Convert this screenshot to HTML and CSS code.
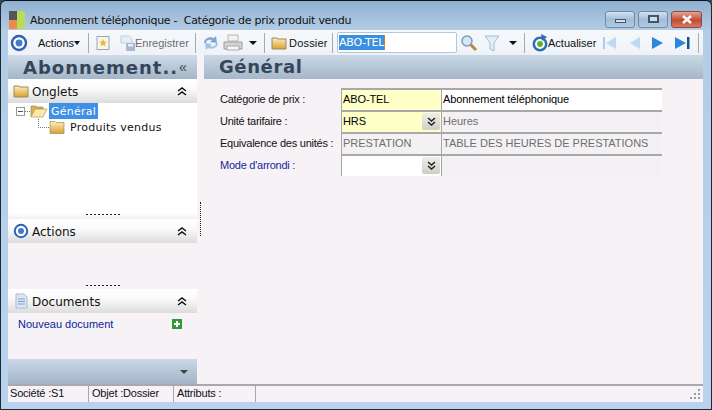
FILE: index.html
```html
<!DOCTYPE html>
<html lang="fr">
<head>
<meta charset="utf-8">
<title>Abonnement téléphonique</title>
<link rel="stylesheet" href="styles.css">
</head>
<body>
<div class="window">
  <header class="titlebar">
    <svg class="app-icon" width="16" height="18" viewBox="0 0 16 18"><rect width="8" height="9" fill="#555"/><rect x="8" width="8" height="18" fill="#b5dd5a"/><rect y="9" width="8" height="9" fill="#f08a4a"/></svg>
    <span class="title">Abonnement téléphonique -  Catégorie de prix produit vendu</span>
    <div class="winbtns">
      <span class="winbtn"><i class="g-min"></i></span>
      <span class="winbtn"><i class="g-max"></i></span>
      <span class="winbtn close">
        <svg width="12" height="9" viewBox="0 0 12 9"><path d="M2 1l8 7M10 1L2 8" stroke="#fff" stroke-width="2.4"/></svg>
      </span>
    </div>
  </header>

  <nav class="toolbar">
    <svg class="ic ic-target" width="18" height="18" viewBox="0 0 18 18"><circle cx="9" cy="9" r="7" fill="#fff" stroke="#2f62b4" stroke-width="2.4"/><circle cx="9" cy="9" r="3.4" fill="#3f7cd0"/></svg>
    <span class="tb-text actions">Actions<i class="caret small"></i></span>
    <i class="sep s1"></i>
    <svg class="ic ic-new" width="16" height="16" viewBox="0 0 16 16"><rect x="2" y="1.5" width="12" height="13" fill="#fbf6e4" stroke="#9aa6bb"/><path d="M8 4l1.2 2.500 2.600.3-2 1.800.6 2.600L8 9.800l-2.400 1.400.6-2.600-2-1.800 2.600-.3z" fill="#e6b83c"/></svg>
    <svg class="ic ic-save" width="16" height="16" viewBox="0 0 16 16"><path d="M1 1h8l3 3v4H1z" fill="#e8edf4" stroke="#c2cddb"/><rect x="6" y="8" width="9" height="8" fill="#a9b9d2"/><rect x="8" y="9" width="5" height="2.500" fill="#e8edf4"/></svg>
    <span class="tb-text disabled enreg">Enregistrer</span>
    <i class="sep s2"></i>
    <svg class="ic ic-sync" width="18" height="18" viewBox="0 0 18 18"><path d="M2 9c0-4 5-7 10-5l2-2 1 7-7-1 2-2C7 5 4 6 4 9z" fill="#7ea6d6"/><path d="M16 9c0 4-5 7-10 5l-2 2-1-7 7 1-2 2c3 1 6 0 6-3z" fill="#a7c3e0"/></svg>
    <svg class="ic ic-print" width="20" height="18" viewBox="0 0 20 18"><path d="M5 1h10v6H5z" fill="#f3f3f3" stroke="#b5b5b5"/><path d="M1 8h18v7H1z" fill="#d4d4d4" stroke="#9c9c9c"/><rect x="4" y="12" width="12" height="4" fill="#f5f5f5" stroke="#aaa"/></svg>
    <i class="caret tb-caret"></i>
    <i class="sep s2"></i>
    <svg class="ic ic-folder" width="16" height="16" viewBox="0 0 16 16"><use href="#folder"/></svg>
    <span class="tb-text dossier">Dossier</span>
    <i class="sep s3"></i>
    <div class="search"><span class="sel">ABO-TEL</span></div>
    <svg class="ic ic-loupe" width="18" height="18" viewBox="0 0 18 18"><path d="M10 10l6 6" stroke="#b78a3a" stroke-width="3"/><circle cx="7" cy="7" r="5" fill="#d3e7f7" stroke="#7d9cba" stroke-width="1.500"/></svg>
    <svg class="ic ic-funnel" width="16" height="18" viewBox="0 0 16 18"><path d="M1 2h14L10 9v8l-4-2V9z" fill="#e3eef8" stroke="#a3bed9"/></svg>
    <i class="caret tb-caret2"></i>
    <i class="sep s2"></i>
    <svg class="ic ic-refresh" width="18" height="18" viewBox="0 0 18 18"><circle cx="9" cy="10" r="6.200" fill="#fff" stroke="#2d6fb3" stroke-width="2.600"/><circle cx="9" cy="10" r="3" fill="#5cb531"/><path d="M10 0l6 3-5 4z" fill="#2d6fb3"/></svg>
    <span class="tb-text act">Actualiser</span>
    <svg class="ic nav n1" width="15" height="16" viewBox="0 0 15 16"><rect x="1" y="2" width="2" height="12" fill="#a9cdef"/><path d="M14 2v12L4 8z" fill="#bcd8f2"/></svg>
    <svg class="ic nav n2" width="15" height="16" viewBox="0 0 15 16"><path d="M13 2v12L3 8z" fill="#bcd8f2"/></svg>
    <svg class="ic nav n3" width="15" height="16" viewBox="0 0 15 16"><path d="M2 2v12L13 8z" fill="#2c86dc"/></svg>
    <svg class="ic nav n4" width="17" height="16" viewBox="0 0 17 16"><path d="M1 2v12L12 8z" fill="#2c86dc"/><rect x="13" y="2" width="2.500" height="12" fill="#1b4f94"/></svg>
    <i class="sep last"></i>
  </nav>

  <div class="body">
    <aside class="sidebar">
      <div class="side-title"><span class="side-name">Abonnement..</span><span class="collapse">«</span></div>

      <div class="pane-head">
        <svg class="pane-ic" width="16" height="16" viewBox="0 0 16 16"><defs><linearGradient id="fg" x1="0" y1="0" x2="0" y2="1"><stop offset="0" stop-color="#fdf0b8"/><stop offset="1" stop-color="#d99f32"/></linearGradient><g id="folder"><path d="M1 3h5l1 1h8v10H1z" fill="url(#fg)" stroke="#9a8a62"/></g></defs><use href="#folder"/></svg>
        <span class="pane-label">Onglets</span>
        <svg class="chev" width="10" height="9" viewBox="0 0 10 9"><path d="M1 4l4-3 4 3M1 8l4-3 4 3" fill="none" stroke="#111" stroke-width="1.500"/></svg>
      </div>
      <div class="tree">
        <div class="tree-row">
          <span class="expander"></span><span class="dash"></span>
          <svg class="tree-ic" width="18" height="14" viewBox="0 0 18 14"><path d="M1 2h5l1 1h6v2H5L1 13z" fill="#e2b04c" stroke="#9a8a62" stroke-width=".7"/><path d="M5 5h12l-4 8H1z" fill="#fbe9a8" stroke="#b09a5c" stroke-width=".7"/></svg>
          <span class="node sel-node">Général</span>
        </div>
        <div class="tree-row child">
          <span class="elbow"></span>
          <svg class="tree-ic" width="16" height="14" viewBox="0 0 16 14"><path d="M1 1.500h5l1 1h8v11H1z" fill="url(#fg)" stroke="#9a8a62" stroke-width=".7"/></svg>
          <span class="node">Produits vendus</span>
        </div>
      </div>
      <div class="grip"><i></i></div>

      <div class="pane-head">
        <svg class="pane-ic target" width="16" height="16" viewBox="0 0 16 16"><circle cx="8" cy="8" r="6.200" fill="#fff" stroke="#2f62b4" stroke-width="2"/><circle cx="8" cy="8" r="3" fill="#3f7cd0"/></svg>
        <span class="pane-label">Actions</span>
        <svg class="chev" width="10" height="9" viewBox="0 0 10 9"><path d="M1 4l4-3 4 3M1 8l4-3 4 3" fill="none" stroke="#111" stroke-width="1.500"/></svg>
      </div>
      <div class="actions-body"></div>
      <div class="grip tint"><i></i></div>

      <div class="pane-head">
        <svg class="pane-ic" width="16" height="16" viewBox="0 0 16 16"><path d="M3 1h8l3 3v11H3z" fill="#dce7f6" stroke="#a8b9d2"/><path d="M5 6h7M5 8.500h7M5 11h7" stroke="#7f9cc7"/></svg>
        <span class="pane-label">Documents</span>
        <svg class="chev" width="10" height="9" viewBox="0 0 10 9"><path d="M1 4l4-3 4 3M1 8l4-3 4 3" fill="none" stroke="#111" stroke-width="1.500"/></svg>
      </div>
      <div class="docs">
        <a class="doc-link">Nouveau document</a>
        <svg class="plus" width="10" height="10" viewBox="0 0 10 10"><rect width="10" height="10" fill="#2f9a3c"/><path d="M5 2v6M2 5h6" stroke="#fff" stroke-width="2"/></svg>
      </div>
      <div class="side-foot"><i class="caret foot-caret"></i></div>
    </aside>

    <div class="splitter"><i></i></div>

    <main class="main">
      <h1 class="main-title">Général</h1>
      <div class="form">
        <label class="lbl">Catégorie de prix :</label>
        <div class="field req">ABO-TEL</div>
        <div class="field white">Abonnement téléphonique</div>

        <label class="lbl">Unité tarifaire :</label>
        <div class="field req">HRS<span class="combo"><svg width="9" height="9" viewBox="0 0 9 9"><path d="M1 1l3.500 3L8 1M1 5l3.500 3L8 5" fill="none" stroke="#222" stroke-width="1.500"/></svg></span></div>
        <div class="field ro">Heures</div>

        <label class="lbl">Equivalence des unités :</label>
        <div class="field ro">PRESTATION</div>
        <div class="field ro">TABLE DES HEURES DE PRESTATIONS</div>

        <label class="lbl link">Mode d'arrondi :</label>
        <div class="field white">&nbsp;<span class="combo"><svg width="9" height="9" viewBox="0 0 9 9"><path d="M1 1l3.500 3L8 1M1 5l3.500 3L8 5" fill="none" stroke="#222" stroke-width="1.500"/></svg></span></div>
        <div class="field ro"></div>
      </div>
    </main>
  </div>

  <footer class="status">
    <span class="cell c1">Société :S1</span>
    <span class="cell c2">Objet :Dossier</span>
    <span class="cell c3">Attributs :</span>
    <span class="cell c4"></span>
    <svg class="resize" width="12" height="12" viewBox="0 0 12 12"><path d="M9 1h2v2H9zM5 5h2v2H5zM9 5h2v2H9zM1 9h2v2H1zM5 9h2v2H5zM9 9h2v2H9z" fill="#9a9aa0"/></svg>
  </footer>
</div>
</body>
</html>
```

FILE: styles.css
```css
* { box-sizing: border-box; }
html, body { margin: 0; padding: 0; }
body { width: 712px; height: 410px; overflow: hidden; background: #3a4a55; font-family: "Liberation Sans", Arial, sans-serif; font-size: 11px; color: #000; }

.window { width: 712px; height: 410px; display: flex; flex-direction: column; padding: 0 8px 7px 7px; border: 1px solid #1c2a33; border-top-color: #111; border-radius: 6px 6px 0 0; background: linear-gradient(180deg, #8fb0d0 0, #b4cde6 30px, #b9d2ee 100%); }

.titlebar { height: 29px; flex: none; display: flex; align-items: center; padding-top: 9px; }
.app-icon { flex: none; margin: 0 5px 0 1px; }
.title { font-family: "DejaVu Sans", sans-serif; font-size: 11px; letter-spacing: -0.27px; white-space: pre; color: #111; }
.winbtns { margin-left: auto; display: flex; gap: 3px; margin-top: -2px; margin-right: 1px; }
.winbtn { width: 30px; height: 17px; border: 1px solid #6f8aa5; border-radius: 3px; background: linear-gradient(180deg, #d3e1ef, #a3bdd7 50%, #b3cae1); display: flex; align-items: center; justify-content: center; }
.winbtn.close { width: 31px; border-color: #8a4a40; background: linear-gradient(180deg, #e6a493, #c14a34 55%, #d77a62); }
.g-min { width: 11px; height: 4px; border: 1px solid #456; background: #dde; margin-top: 3px; }
.g-max { width: 11px; height: 8px; border: 2px solid #456; background: #cde; }

.toolbar { height: 25px; flex: none; display: flex; align-items: center; background: linear-gradient(180deg, #f6f8fb, #eef2f7); padding-left: 2px; }
.ic { flex: none; display: block; }
.tb-text { font-family: "Liberation Sans", sans-serif; font-size: 11px; color: #111; white-space: nowrap; flex: none; }
.tb-text.disabled { color: #6c6c6c; }
.actions { margin-left: 10px; width: 41px; display: flex; align-items: center; }
.caret { display: inline-block; flex: none; width: 0; height: 0; border-left: 4px solid transparent; border-right: 4px solid transparent; border-top: 4px solid #111; }
.caret.small { border-left-width: 3.5px; border-right-width: 3.5px; }
.sep { flex: none; width: 1px; height: 20px; background: #a9a9a9; margin: 0 6px 0 7px; }
.sep.s1 { margin-left: 9px; }
.sep.s3 { margin: 0 4px 0 8px; }
.ic-new { margin-right: 9px; }
.enreg { margin-left: -1px; width: 53px; }
.ic-print { margin-left: 3px; }
.tb-caret { margin-left: 6px; }
.dossier { margin-left: 2px; width: 35px; letter-spacing: 0.2px; }
.search { width: 120px; height: 21px; flex: none; border: 1px solid #b4c6da; border-radius: 2px; background: #fff; padding: 2px 1px; font-size: 11px; font-family: "DejaVu Sans", sans-serif; letter-spacing: -0.2px; }
.sel { background: #3b8fe0; color: #fff; display: inline-block; height: 15px; line-height: 15px; border-right: 1px solid #d9792a; }
.ic-loupe { margin-left: 3px; }
.ic-funnel { margin-left: 6px; }
.tb-caret2 { margin-left: 9px; }
.act { margin-left: -1px; width: 47px; }
.n1 { margin-left: 7px; }
.n2 { margin-left: 10px; }
.n3 { margin-left: 8px; }
.n4 { margin-left: 9px; }
.sep.last { margin: 0 0 0 7px; }

.body { flex: 1; display: flex; min-height: 0; background: #f6f2f6; }
.sidebar { width: 189px; flex: none; display: flex; flex-direction: column; }
.side-title, .main-title { height: 24px; flex: none; }
.side-title { display: flex; align-items: center; padding-left: 15px; overflow: hidden; background: linear-gradient(180deg, #cfdce9 0, #a3b6c7 100%); }
.side-name { font-family: "DejaVu Sans", sans-serif; font-weight: 700; font-size: 18px; letter-spacing: 1px; color: #35465a; white-space: nowrap; }
.collapse { font-size: 14px; color: #444; margin-left: 1px; line-height: 14px; }
.pane-head { height: 24px; flex: none; display: flex; align-items: center; padding: 0 10px 0 5px; background: linear-gradient(180deg, #ffffff 0, #fafafa 40%, #dcdcdc 100%); }
.pane-ic { flex: none; margin-right: 3px; }
.pane-label { font-family: "DejaVu Sans", sans-serif; font-size: 12px; color: #111; margin-top: 1px; }
.chev { margin-left: auto; }

.tree { height: 110px; flex: none; background: #fff; padding: 0 0 0 5px; font-family: "DejaVu Sans", sans-serif; font-size: 11px; }
.tree-row { display: flex; align-items: center; height: 16px; }
.tree-row .node { height: 16px; line-height: 17px; padding: 0 2px; color: #111; white-space: nowrap; letter-spacing: 0.25px; }
.sel-node { background: #3e8fe6; color: #fff !important; margin-left: 1px; }
.expander { width: 9px; height: 9px; border: 1px solid #999; background: linear-gradient(#555, #555) center/5px 1px no-repeat, #fff; margin-left: 3px; flex: none; }
.dash { width: 5px; border-top: 1px dotted #777; flex: none; }
.tree-ic { flex: none; }
.elbow { width: 11px; height: 9px; margin: -8px 0 0 25px; border-left: 1px dotted #777; border-bottom: 1px dotted #777; flex: none; }
.child .node { margin-left: 3px; }
.grip { height: 6px; flex: none; background: linear-gradient(180deg, #fff, #f1f1f1); display: flex; align-items: flex-start; justify-content: center; }
.grip i { width: 34px; height: 1px; margin-top: 1px; background: repeating-linear-gradient(90deg, #222 0 2px, transparent 2px 4px); }
.grip.tint { background: #f6f2f6; }
.grip.tint i { margin-top: 2px; }
.actions-body { height: 40px; flex: none; background: #f6f2f6; }
.docs { height: 46px; flex: none; display: flex; align-items: flex-start; padding: 5px 15px 0 10px; background: #f6f2f6; }
.doc-link { font-family: "Liberation Sans", sans-serif; font-size: 11px; color: #0a1e9c; }
.plus { margin-left: auto; margin-top: 1px; }
.side-foot { flex: 1; background: linear-gradient(180deg, #c9d8e8, #a3b4c6); display: flex; align-items: center; justify-content: flex-end; padding-right: 9px; }
.foot-caret { border-top-color: #444; }

.splitter { width: 7px; flex: none; position: relative; }
.splitter i { position: absolute; left: 3px; top: 147px; height: 34px; border-left: 1px dotted #222; }

.main { flex: 1; min-width: 0; }
.main-title { margin: 0; padding-left: 15px; font-family: "DejaVu Sans", sans-serif; font-weight: 700; font-size: 18px; line-height: 24px; letter-spacing: 0.6px; color: #35465a; background: linear-gradient(180deg, #c9d8e6, #a5b7c8); }
.form { display: grid; grid-template-columns: 121px 100px 221px; grid-auto-rows: 22px; margin: 9px 0 0 16px; }
.lbl { font-family: "Liberation Sans", sans-serif; font-size: 11px; display: flex; align-items: center; letter-spacing: -0.25px; color: #111; white-space: nowrap; }
.lbl.link { color: #1a1f9c; }
.field { position: relative; border-top: 2px solid #a8a8a8; border-left: 1px solid #a8a8a8; padding: 1px 0 0 1px; font-family: "Liberation Sans", sans-serif; font-size: 11px; letter-spacing: -0.1px; line-height: 17px; white-space: nowrap; overflow: hidden; }
.field.req { background: #ffffc8; }
.field.white { background: #fff; }
.field.ro { color: #6e6e6e; background: #f4f1f4; letter-spacing: -0.02px; }
.combo { position: absolute; right: 1px; top: 1px; width: 18px; height: 17px; border-radius: 2px; background: linear-gradient(180deg, #eeeeea, #cfcfc7); display: flex; align-items: center; justify-content: center; }

.status { height: 18px; flex: none; display: flex; background: #f6f2f6; border-top: 2px solid #a8a8b0; position: relative; font-family: "Liberation Sans", sans-serif; font-size: 11px; letter-spacing: -0.2px; color: #111; }
.cell { border-right: 1px solid #a8a8a8; padding: 1px 0 0 2px; white-space: nowrap; }
.c1 { width: 81px; }
.c2 { width: 85px; padding-left: 3px; }
.c3 { width: 82px; padding-left: 3px; }
.c4 { width: 0; flex: 1; border-right: 0; }
.resize { position: absolute; right: 2px; bottom: 2px; }
```
